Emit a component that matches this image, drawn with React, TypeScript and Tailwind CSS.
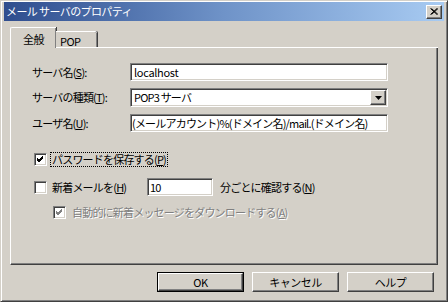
import React from 'react';

const font = { fontFamily: '"MS UI Gothic", "Noto Sans CJK JP", "Noto Sans", sans-serif' };

const sunken =
  'bg-white border border-t-[#808080] border-l-[#808080] border-b-white border-r-white shadow-[inset_1px_1px_0_#404040,inset_-1px_-1px_0_#d4d0c8]';
const raised =
  'bg-[#d4d0c8] border border-t-white border-l-white border-b-[#404040] border-r-[#404040] shadow-[inset_-1px_-1px_0_#808080]';

function U({ children }: { children: React.ReactNode }) {
  return <span className="underline underline-offset-1">{children}</span>;
}

function CheckBox({ checked, disabled }: { checked?: boolean; disabled?: boolean }) {
  return (
    <span className={`w-[13px] h-[13px] flex items-center justify-center shrink-0 ${sunken} ${disabled ? 'bg-[#d4d0c8]' : ''}`}>
      {checked && (
        <svg width="7" height="7" viewBox="0 0 7 7">
          <path d="M0 2 L2 4 L6 0 M0 3 L2 5 L6 1 M0 4 L2 6 L6 2" stroke={disabled ? '#808080' : '#000'} strokeWidth="1" fill="none" />
        </svg>
      )}
    </span>
  );
}

function Button({ label, def }: { label: string; def?: boolean }) {
  return (
    <div className={`h-[20px] w-[87px] ${def ? 'border border-black' : ''}`}>
      <div className={`h-full w-full flex items-center justify-center text-[11px] tracking-[-0.5px] text-black ${raised}`}>{label}</div>
    </div>
  );
}

export default function App() {
  return (
    <div
      className="w-[448px] h-[302px] bg-[#d4d0c8] border border-t-[#d4d0c8] border-l-[#d4d0c8] border-r-[#404040] border-b-[#404040] shadow-[inset_1px_1px_0_#fff,inset_-1px_-1px_0_#808080] px-[3px] pt-[1px] flex flex-col overflow-hidden"
      style={font}
    >
      {/* title bar */}
      <div className="h-[19px] bg-gradient-to-r from-[#2f4d8e] via-[#6f93c8] to-[#a8cbf2] flex items-center justify-between pl-[2px] pr-[2px]">
        <span className="text-white text-[11px] tracking-[-0.6px] leading-none">メール サーバのプロパティ</span>
        <div className={`w-[16px] h-[14px] flex items-center justify-center ${raised}`}>
          <svg width="8" height="7" viewBox="0 0 8 7">
            <path d="M0.5 0.5 L7 6.5 M1.5 0.5 L8 6.5 M7 0.5 L0.5 6.5 M8 0.5 L1.5 6.5" stroke="#000" strokeWidth="1" />
          </svg>
        </div>
      </div>

      <div className="px-[6px] pt-[7px] flex flex-col">
        {/* tabs */}
        <div className="flex items-end h-[20px] relative z-10 text-[11px] tracking-[-0.5px]">
          <div className="h-[21px] w-[46px] bg-[#d4d0c8] border-t border-l border-white rounded-tl-[2px] shadow-[inset_-1px_0_0_#808080,1px_0_0_#404040] flex items-start justify-center pt-[3px] text-black">
            全般
          </div>
          <div className="h-[17px] w-[41px] bg-[#d4d0c8] border-t border-white rounded-tr-[2px] shadow-[inset_-1px_0_0_#808080,1px_0_0_#404040] flex items-start pl-[4px] pt-[1px] text-black border-b border-b-white">
            POP
          </div>
          <div className="flex-1 border-b border-white" />
        </div>

        {/* panel */}
        <div className="h-[218px] -mt-[1px] border border-t-white border-l-white border-r-[#404040] border-b-[#404040] shadow-[inset_-1px_-1px_0_#808080] flex flex-col pl-[21px] pt-[15px] text-[11px] tracking-[-0.8px] text-black">
          <div className="flex items-center h-[18px]">
            <span className="w-[98px]">サーバ名(<U>S</U>):</span>
            <div className={`w-[258px] h-[18px] ${sunken} flex items-center pl-[3px] tracking-[-0.3px]`}>localhost</div>
          </div>
          <div className="flex items-center h-[19px] mt-[7px]">
            <span className="w-[98px]">サーバの種類(<U>T</U>):</span>
            <div className={`w-[258px] h-[19px] ${sunken} flex items-center justify-between pl-[3px] pr-[1px]`}>
              <span>POP3 サーバ</span>
              <div className={`w-[16px] h-[15px] flex items-center justify-center ${raised}`}>
                <svg width="7" height="4" viewBox="0 0 7 4">
                  <path d="M0 0 H7 L3.5 4 Z" fill="#000" />
                </svg>
              </div>
            </div>
          </div>
          <div className="flex items-center h-[18px] mt-[7px]">
            <span className="w-[98px]">ユーザ名(<U>U</U>):</span>
            <div className={`w-[258px] h-[18px] ${sunken} flex items-center pl-[1px] whitespace-nowrap overflow-hidden`}>
              (メールアカウント)%(ドメイン名)/mail.(ドメイン名)
            </div>
          </div>

          <div className="flex items-center h-[16px] mt-[19px] pl-[2px]">
            <CheckBox checked />
            <span className="ml-[4px] px-[1px] outline outline-1 outline-dotted outline-black leading-[13px]">
              パスワードを保存する(<U>P</U>)
            </span>
          </div>

          <div className="flex items-center h-[18px] mt-[11px] pl-[2px]">
            <CheckBox />
            <span className="ml-[5px] w-[95px]">新着メールを(<U>H</U>)</span>
            <div className={`w-[66px] h-[18px] ${sunken} flex items-center pl-[2px]`}>10</div>
            <span className="ml-[7px]">分ごとに確認する(<U>N</U>)</span>
          </div>

          <div className="flex items-center h-[16px] mt-[8px] pl-[21px] text-[#808080]">
            <CheckBox checked disabled />
            <span className="ml-[6px] [text-shadow:1px_1px_0_#fff]">
              自動的に新着メッセージをダウンロードする(<U>A</U>)
            </span>
          </div>
        </div>

        {/* buttons */}
        <div className="flex justify-end gap-[8px] mt-[7px] pr-[4px]">
          <Button label="OK" def />
          <Button label="キャンセル" />
          <Button label="ヘルプ" />
        </div>
      </div>
    </div>
  );
}
